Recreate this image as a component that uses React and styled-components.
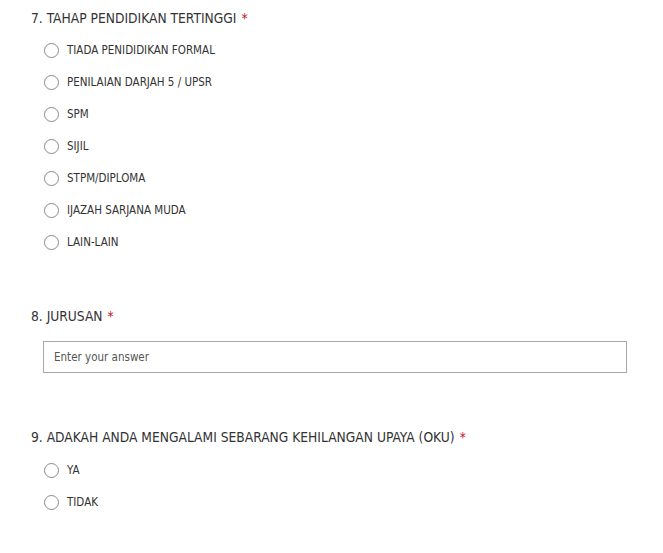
import React from "react";
import styled, { createGlobalStyle } from "styled-components";

const Global = createGlobalStyle`
  html, body { margin: 0; padding: 0; background: #fff; }
  body { font-family: "DejaVu Sans Condensed", "DejaVu Sans", sans-serif; color: #333; }
`;

const Page = styled.div`
  padding: 8px 0 0 31px;
  width: 596px;
`;

const Question = styled.section`
  margin-bottom: ${(p) => p.$gap || 0}px;
`;

const Title = styled.div`
  font-size: 13.7px;
  line-height: 20px;
  height: 20px;
  color: #333;
  white-space: nowrap;
`;

const Star = styled.span`
  color: #c50f1f;
  margin-left: 5px;
`;

const Options = styled.div`
  display: flex;
  flex-direction: column;
  margin-top: ${(p) => p.$top}px;
  padding-left: 13px;
`;

const Row = styled.label`
  display: flex;
  align-items: center;
  height: 32px;
  gap: 8px;
  font-size: 11.5px;
  color: #333;
`;

const Circle = styled.span`
  width: 13px;
  height: 13px;
  border: 1px solid #8a8a8a;
  border-radius: 50%;
  flex: none;
`;

const Input = styled.div`
  margin: 15px 0 0 12px;
  height: 30px;
  border: 1px solid #a8a8a8;
  display: flex;
  align-items: center;
  padding-left: 10px;
  font-size: 11.5px;
  color: #555;
`;

const Q = ({ title, children, gap }) => (
  <Question $gap={gap}>
    <Title>
      {title}
      <Star>*</Star>
    </Title>
    {children}
  </Question>
);

export default function App() {
  const edu = [
    "TIADA PENIDIDIKAN FORMAL",
    "PENILAIAN DARJAH 5 / UPSR",
    "SPM",
    "SIJIL",
    "STPM/DIPLOMA",
    "IJAZAH SARJANA MUDA",
    "LAIN-LAIN",
  ];
  return (
    <>
      <Global />
      <Page>
        <Q title="7. TAHAP PENDIDIKAN TERTINGGI" gap={48}>
          <Options $top={6}>
            {edu.map((t) => (
              <Row key={t}>
                <Circle />
                {t}
              </Row>
            ))}
          </Options>
        </Q>
        <Q title="8. JURUSAN" gap={54}>
          <Input>Enter your answer</Input>
        </Q>
        <Q title="9. ADAKAH ANDA MENGALAMI SEBARANG KEHILANGAN UPAYA (OKU)">
          <Options $top={7}>
            {["YA", "TIDAK"].map((t) => (
              <Row key={t}>
                <Circle />
                {t}
              </Row>
            ))}
          </Options>
        </Q>
      </Page>
    </>
  );
}
